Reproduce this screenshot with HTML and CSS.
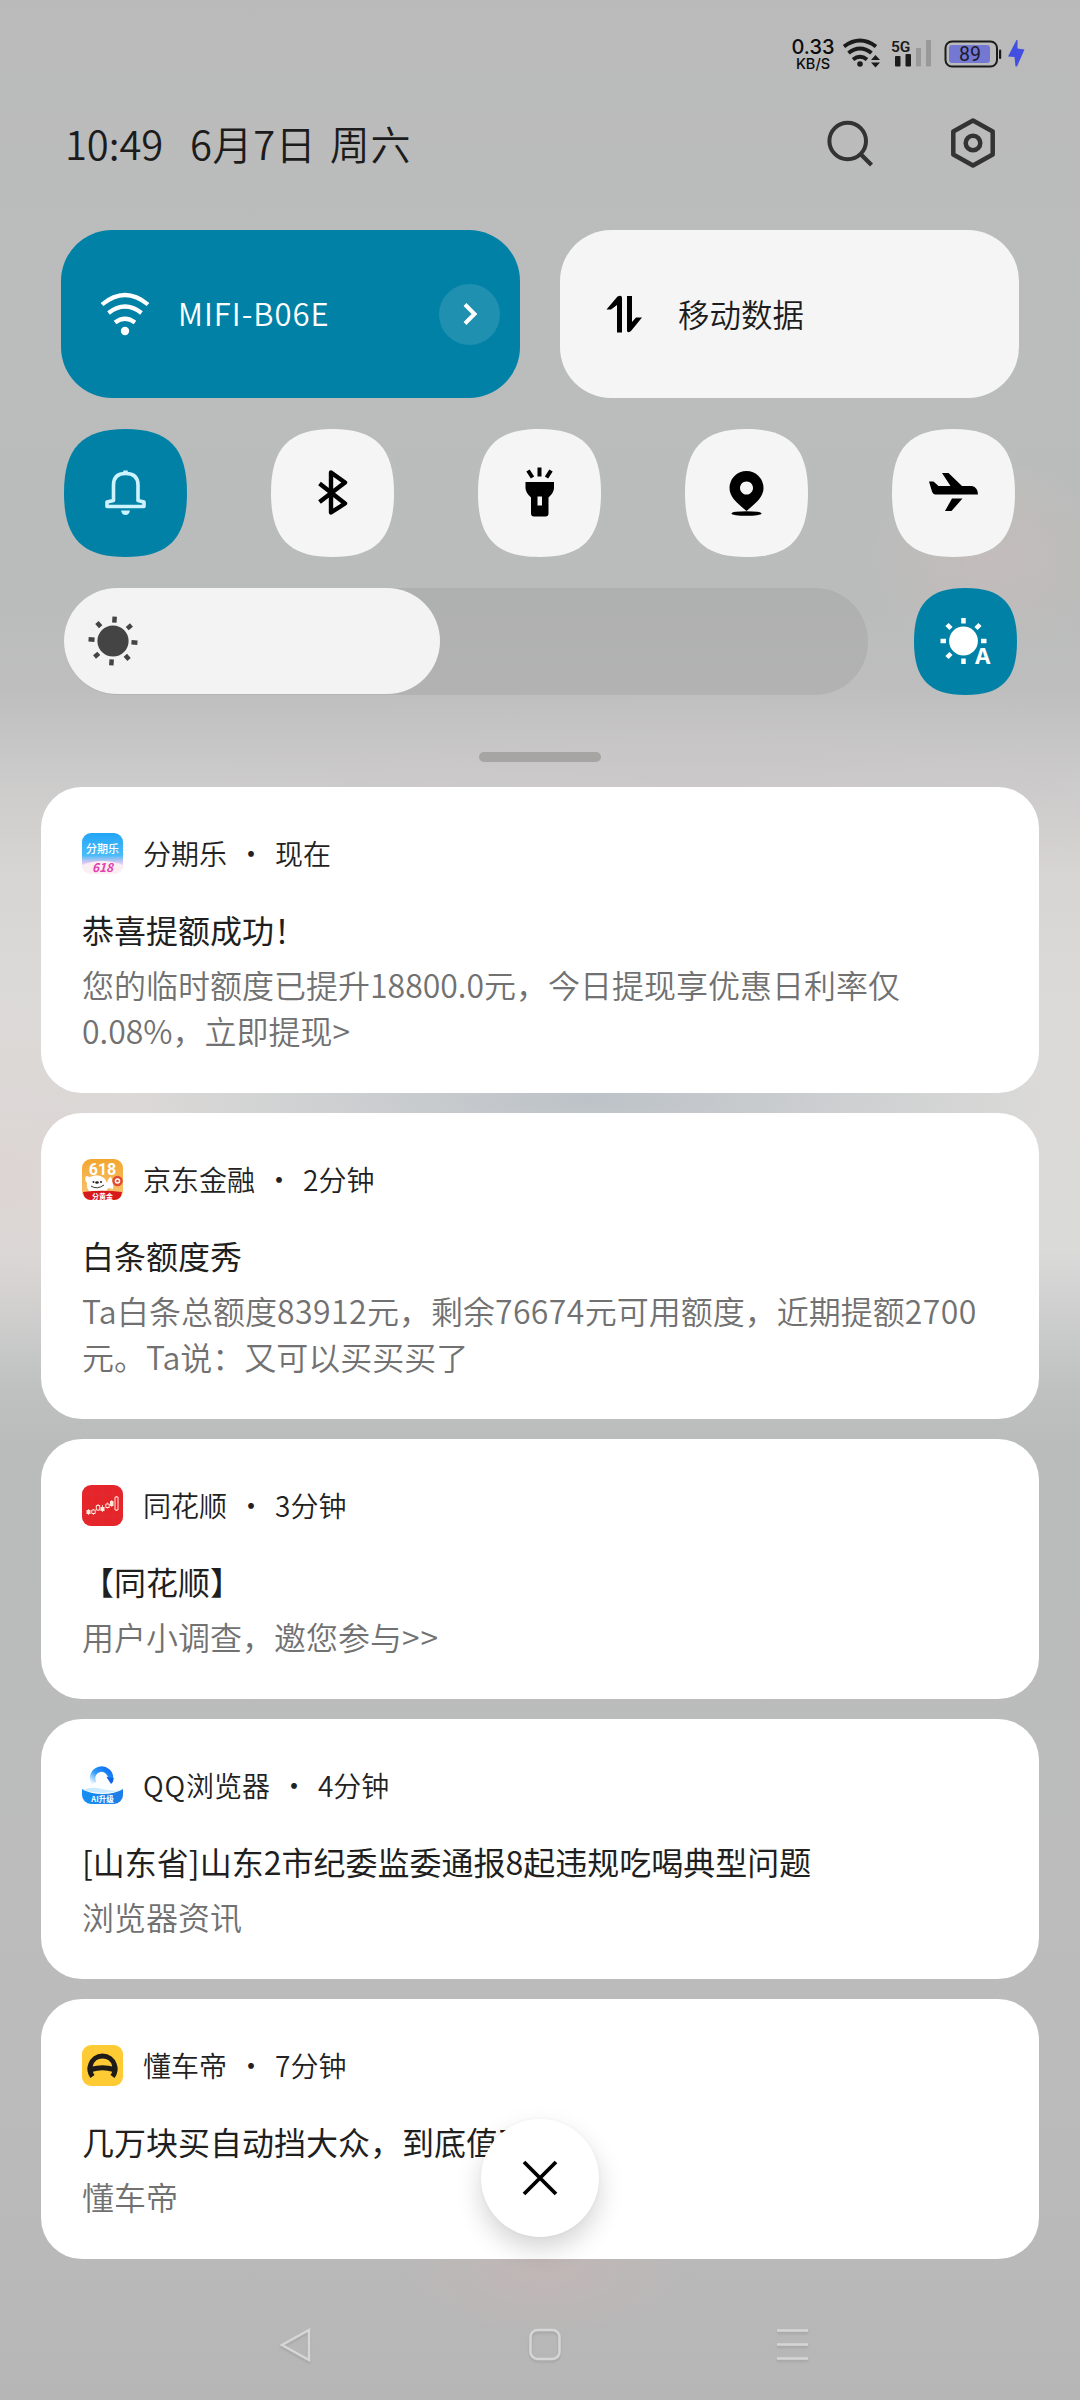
FILE: index.html
```html
<!DOCTYPE html>
<html lang="zh-CN">
<head>
<meta charset="utf-8">
<title>通知中心</title>
<link rel="stylesheet" href="styles.css">
</head>
<body>
<main class="shade">
  <div class="status">
    <div class="speed"><span class="speed-num">0.33</span><span class="speed-unit">KB/S</span></div>
    <svg class="status-icons" width="240" height="40" viewBox="840 33 240 40">
      <g fill="none" stroke="#1b1b1b" stroke-width="4">
        <path d="M844 46.5Q860 34.500 876 46.500"/>
        <path d="M848.500 53Q860 44 871.500 53"/>
        <path d="M853 59.500Q860 54 867 59.500"/>
      </g>
      <circle cx="860" cy="64" r="2.800" fill="#1b1b1b"/>
      <path d="M871 60l4.500-5 4.500 5zM871 62.500l4.500 5 4.500-5z" fill="#1b1b1b"/>
      <text x="891" y="51.500" class="net">5G</text>
      <rect x="895" y="56" width="5.500" height="10.500" rx="1" fill="#1b1b1b"/>
      <rect x="905.500" y="54" width="5.500" height="12.500" rx="1" fill="#1b1b1b"/>
      <rect x="916" y="48" width="5" height="18.500" rx="1" fill="#999"/>
      <rect x="926" y="40" width="5" height="26.500" rx="1" fill="#999"/>
      <rect x="945.500" y="41.500" width="51.500" height="25" rx="6.500" fill="none" stroke="#1b1b1b" stroke-width="2"/>
      <rect x="949" y="45" width="41" height="18" rx="3" fill="#7478d2"/>
      <rect x="999" y="49.500" width="2.200" height="9.500" rx="1" fill="#1b1b1b"/>
      <text x="959" y="61" class="pct">89</text>
      <path d="M1016.500 40L1008 56.500L1014.500 57L1015.500 66.500H1017L1024.500 49.500L1017.500 48.500L1017.500 40Z" fill="#424fe0"/>
    </svg>
  </div>

  <header class="top">
    <span class="clock">10:49</span>
    <span class="date">6月7日 周六</span>
    <svg class="top-icons" width="180" height="60" viewBox="820 113 180 60" fill="none" stroke="#333">
      <circle cx="847.700" cy="141" r="18.300" stroke-width="4"/>
      <path d="M861 154.500L871.500 165" stroke-width="4.200"/>
      <path d="M973 120.500L992.700 131.500V154.500L973 165.500L953.300 154.500V131.500Z" stroke-width="4.500" stroke-linejoin="round"/>
      <circle cx="973" cy="143" r="7.300" stroke-width="4.500"/>
    </svg>
  </header>

  <section class="wide-tiles">
    <div class="wide on">
      <svg width="50" height="44" viewBox="100 291 50 44">
        <g fill="none" stroke="#fff" stroke-width="4.200">
          <path d="M102 303.500Q125 284.500 148 303.500"/>
          <path d="M108.500 312Q125 299 141.500 312"/>
          <path d="M115 321.500Q125 314 135 321.500"/>
        </g>
        <circle cx="125" cy="330" r="4.200" fill="#fff"/>
      </svg>
      <span class="wide-label ssid">MIFI-B06E</span>
      <span class="more">
        <svg width="20" height="28" viewBox="0 0 20 28"><path d="M5 4.500L14.500 14L5 23.500" fill="none" stroke="#fff" stroke-width="4"/></svg>
      </span>
    </div>
    <div class="wide">
      <svg class="data" width="36" height="38" viewBox="606 294 36 38">
        <path d="M606.500 308.500L617.500 295.500Q622 293.500 622 297V331.500H617V304L611 308.500ZM627 295h5v26l4-4.500h6L631 330Q627 333 627 329Z" fill="#000"/>
      </svg>
      <span class="wide-label dark">移动数据</span>
    </div>
  </section>

  <section class="tiles">
    <svg width="123" height="128" viewBox="0 0 123 128">
      <path class="sq-on" d="M0 64C0 19 18 0 61.500 0S123 19 123 64 105 128 61.500 128 0 109 0 64Z"/>
      <g fill="none" stroke="#cdf3ff" stroke-width="3.600" stroke-linejoin="round">
        <path d="M49.500 71.500V56C49.500 48 54 44.500 61.500 44.500S74 48 74 56V71.500L80 73V77.500H43V73Z"/>
        <path d="M61.500 41.500v3" stroke-width="4.500"/>
      </g>
      <path d="M57 81.500h9q-1 4.500-4.500 4.500T57 81.500Z" fill="#cdf3ff"/>
    </svg>
    <svg width="123" height="128" viewBox="0 0 123 128">
      <path class="sq" d="M0 64C0 19 18 0 61.500 0S123 19 123 64 105 128 61.500 128 0 109 0 64Z"/>
      <path d="M48.500 54.500L74 74.500L60 83.500V43.500L74 53.500L48.500 73" fill="none" stroke="#000" stroke-width="4.400" stroke-linejoin="round"/>
    </svg>
    <svg width="123" height="128" viewBox="0 0 123 128">
      <path class="sq" d="M0 64C0 19 18 0 61.500 0S123 19 123 64 105 128 61.500 128 0 109 0 64Z"/>
      <path d="M50 41.500l4.500 7M61.500 38.500v9M73 41.500l-4.500 7" stroke="#000" stroke-width="4" fill="none"/>
      <path fill-rule="evenodd" d="M47.500 53h28.500v6q0 4.500-5.500 9.500v16q0 3-3 3H56q-3 0-3-3v-16q-5.500-5-5.500-9.500ZM59.500 67.500v9h4.500v-9Z"/>
    </svg>
    <svg width="123" height="128" viewBox="0 0 123 128">
      <path class="sq" d="M0 64C0 19 18 0 61.500 0S123 19 123 64 105 128 61.500 128 0 109 0 64Z"/>
      <path fill-rule="evenodd" d="M61.500 82C52 74 44.500 68 44.500 59a17 17 0 0 1 34 0C78.500 68 71 74 61.500 82ZM61.500 52.500a6.500 6.500 0 1 0 .01 0Z"/>
      <ellipse cx="61.500" cy="84.500" rx="15" ry="2.300"/>
    </svg>
    <svg width="123" height="128" viewBox="0 0 123 128">
      <path class="sq" d="M0 64C0 19 18 0 61.500 0S123 19 123 64 105 128 61.500 128 0 109 0 64Z"/>
      <path d="M37 52.500h4.500l5 4.500h12L50 44h6.500L70 57h10q6 1.500 6 8.500H43.500q-2.500 0-3.500-3ZM60 69.500h10.500L59.500 82H53Z"/>
    </svg>
  </section>

  <section class="bright">
    <div class="slider"><div class="fill">
      <svg width="50" height="52" viewBox="-25 -26 50 52" fill="#444">
        <circle r="15.600"/>
        <g stroke="#444" stroke-width="4.500" transform="rotate(4)">
          <path d="M0-18.500v-6M0 18.500v6M18.500 0h6M-18.500 0h-6M13.300-13.300l4-4M-13.300 13.300l-4 4M13.300 13.300l4 4M-13.300-13.300l-4-4"/>
        </g>
      </svg>
    </div></div>
    <svg width="103" height="107" viewBox="0 0 103 107">
      <path class="sq-on" d="M0 53.500C0 16 15 0 51.500 0S103 16 103 53.500 88 107 51.500 107 0 91 0 53.500Z"/>
      <circle cx="49.500" cy="53" r="14.400" fill="#fff"/>
      <path transform="translate(49.500 53)" stroke="#fff" stroke-width="4.500" d="M0-17.500v-5.500M0 17.500v5.500M17.500 0h5.500M-17.500 0h-5.500M12.500-12.500l4-4M-12.500 12.500l-4 4M-12.500-12.500l-4-4"/>
      <text x="60.500" y="76" class="auto">A</text>
    </svg>
  </section>

  <div class="handle"></div>

  <section class="cards">
    <article class="card">
      <div class="head">
        <svg class="app" viewBox="0 0 41 41">
          <defs><linearGradient id="sky" x2="0" y2="1"><stop offset="0" stop-color="#22a5f6"/><stop offset=".55" stop-color="#4bbcf8"/><stop offset=".72" stop-color="#d9c8f0"/><stop offset="1" stop-color="#fff0ef"/></linearGradient></defs>
          <rect width="41" height="41" rx="9" fill="url(#sky)"/>
          <path d="M0 32Q20 24 41 32a9 9 0 0 1-9 9H9a9 9 0 0 1-9-9Z" fill="#fbeff2"/>
          <text x="20.500" y="20" class="logo thin" font-size="11" fill="#fff">分期乐</text>
          <text x="20.500" y="39" class="logo slant" font-size="12" fill="#e23fae">618</text>
        </svg>
        <span>分期乐</span><span class="dot">·</span><span>现在</span>
      </div>
      <h2>恭喜提额成功！</h2>
      <p>您的临时额度已提升18800.0元，今日提现享优惠日利率仅<br>0.08%，立即提现&gt;</p>
    </article>
    <article class="card">
      <div class="head">
        <svg class="app" viewBox="0 0 41 41">
          <defs><linearGradient id="gold" x2="0" y2="1"><stop offset="0" stop-color="#f3a52e"/><stop offset="1" stop-color="#f7c77a"/></linearGradient></defs>
          <rect width="41" height="41" rx="9" fill="url(#gold)"/>
          <text x="20.500" y="16" class="logo round" font-size="16" fill="#fff">618</text>
          <path d="M4 17l4 1q8-4 14 1 2 2 3 5 1-5 4-6 3 6 2 12l-5-1-2 4H8q-4-4-3-9-3-3-1-7Z" fill="#fff"/>
          <circle cx="11.500" cy="23" r="1" fill="#222"/><circle cx="19" cy="23" r="1" fill="#222"/><ellipse cx="15" cy="23.500" rx="1.800" ry="1.200" fill="#222"/>
          <path d="M9 27q6 4 13-1" fill="none" stroke="#222" stroke-width=".9"/>
          <circle cx="35.500" cy="22" r="4" fill="#fff" stroke="#e34b32" stroke-width="2.500"/><circle cx="35.500" cy="22" r="1.300" fill="#e34b32"/>
          <path d="M1 33Q20 30.500 40 33Q39 41 32 41H9Q2 41 1 33Z" fill="#d7191c"/>
          <text x="20.500" y="39.500" class="logo" font-size="7" fill="#fff">分黄金</text>
        </svg>
        <span>京东金融</span><span class="dot">·</span><span>2分钟</span>
      </div>
      <h2>白条额度秀</h2>
      <p><span class="n">Ta</span>白条总额度<span class="n">83912</span>元，剩余<span class="n">76674</span>元可用额度，近期提额<span class="n">2700</span><br>元。Ta说：又可以买买买了</p>
    </article>
    <article class="card">
      <div class="head">
        <svg class="app" viewBox="0 0 41 41">
          <rect width="41" height="41" rx="9" fill="#e6252a"/>
          <path d="M10 0v41M20.500 0v41M31 0v41M0 10h41M0 20.500h41M0 31h41" stroke="#d9353a" stroke-width=".5"/>
          <path d="M4.500 25h4v4h-4zM18.500 22h4v4h-4zM28 16h3.500v5H28z" fill="#ffe9dc"/>
          <path d="M6.500 24v6M11.500 24v6M16 19v7M20.500 20v7M25.500 17.500v6M29.700 15v7M34.500 11v15" stroke="#ffe9dc" stroke-width=".8"/>
          <path d="M9.800 25h3.400v3.500H9.800zM14.300 20.500h3.400v4.500h-3.400zM23.800 19h3.400v3.500h-3.400zM33 12h3v13h-3z" fill="#e6252a" stroke="#ffe9dc"/>
        </svg>
        <span>同花顺</span><span class="dot">·</span><span>3分钟</span>
      </div>
      <h2>【同花顺】</h2>
      <p>用户小调查，邀您参与<span class="wide-gt">&gt;&gt;</span></p>
    </article>
    <article class="card">
      <div class="head">
        <svg class="app" viewBox="0 0 41 41">
          <defs><linearGradient id="ring" x1="1" x2="0" y2="1"><stop offset="0" stop-color="#0b6df2"/><stop offset=".55" stop-color="#2e9bf8"/><stop offset="1" stop-color="#e8f6ff"/></linearGradient>
          <linearGradient id="sea" x2="1"><stop offset="0" stop-color="#1590f2"/><stop offset="1" stop-color="#1c7de6"/></linearGradient></defs>
          <path d="M0 9a9 9 0 0 1 9-9H32a9 9 0 0 1 9 9V28H0Z" fill="#fdfeff"/>
          <path d="M0 24Q8 29 20.500 29T41 24V30a9 9 0 0 1-9 9H9a9 9 0 0 1-9-9Z" fill="url(#sea)"/>
          <path d="M1 25Q9 21 20 24T40 25Q30 28 20.500 28T1 25Z" fill="#cbeafd"/>
          <path d="M12 18A9 9 0 1 1 28.500 14" fill="none" stroke="url(#ring)" stroke-width="5.500"/>
          <path d="M24.500 12l7 1q.5 4-2.500 6Z" fill="#0f63e8"/>
          <text x="20.500" y="37" class="logo" font-size="7.500" fill="#fff">AI升级</text>
        </svg>
        <span><span class="qq">QQ</span>浏览器</span><span class="dot">·</span><span>4分钟</span>
      </div>
      <h2>[山东省]山东2市纪委监委通报8起违规吃喝典型问题</h2>
      <p>浏览器资讯</p>
    </article>
    <article class="card">
      <div class="head">
        <svg class="app" viewBox="0 0 41 41">
          <rect width="41" height="41" rx="9" fill="#ffcb35"/>
          <path d="M10.500 31.500Q6.500 26 8.500 20A12.500 12.500 0 0 1 32.500 20Q34.500 26 30.500 31.500M9 24.500Q20.500 21 32 24.500" fill="none" stroke="#1f1c18" stroke-width="5"/>
        </svg>
        <span>懂车帝</span><span class="dot">·</span><span>7分钟</span>
      </div>
      <h2>几万块买自动挡大众，到底值不值？</h2>
      <p>懂车帝</p>
      <div class="close">
        <svg width="36" height="36" viewBox="0 0 36 36"><path d="M2 2L34 34M34 2L2 34" stroke="#000" stroke-width="3.800"/></svg>
      </div>
    </article>
  </section>

  <nav class="nav">
    <svg width="32" height="34" viewBox="0 0 32 34"><path d="M29 2V32L2 17Z"/></svg>
    <svg width="32" height="34" viewBox="0 0 32 34"><rect x="1.500" y="2" width="29" height="29" rx="7"/></svg>
    <svg width="32" height="34" viewBox="0 0 32 34"><path d="M0 2.500H31M0 16.500H31M0 30.500H31"/></svg>
  </nav>
</main>
</body>
</html>
```
FILE: styles.css
```css
* { box-sizing: border-box; }
body { margin: 0; }
svg { display: block; flex: none; }

.shade {
  width: 1080px;
  height: 2400px;
  overflow: hidden;
  display: flex;
  flex-direction: column;
  font-family: "Noto Sans CJK SC", "Noto Sans", sans-serif;
  font-weight: 350;
  color: #1c1c1c;
  background:
    radial-gradient(ellipse 120px 100px at 990px 560px, rgba(205,188,188,.5), transparent),
    radial-gradient(ellipse 150px 70px at 545px 2270px, rgba(202,180,180,.5), transparent),
    radial-gradient(ellipse 460px 90px at 590px 1100px, rgba(178,186,194,.75), transparent),
    radial-gradient(ellipse 240px 180px at 0 1180px, rgba(222,208,206,.55), transparent),
    radial-gradient(ellipse 500px 120px at 700px 790px, rgba(200,196,198,.5), transparent),
    linear-gradient(#bababa 0, #bbbdbc 350px, #babcbb 600px, #bebebe 690px, #cbcaca 770px, #d7d5d3 870px, #dcdad8 1000px, #dadad9 1250px, #bfc1c1 1390px, #babcbb 1450px, #bbbcbb 1900px, #b9b9b9 2260px, #b6b6b6 2400px);
}

.status { display: flex; height: 73px; padding: 33px 0 0 791px; }
.speed { width: 49px; padding: 5px 5px 0 0; display: flex; flex-direction: column; align-items: center; font-family: Inter, sans-serif; font-weight: 500; color: #0c0c0c; }
.speed-num { font-size: 20px; line-height: 18px; }
.speed-unit { font-size: 14.500px; line-height: 16px; }
.net { font: 600 15.500px Roboto, sans-serif; fill: #1b1b1b; }
.pct { font: 400 19.500px Roboto, sans-serif; fill: #1b1b2b; }

.top { display: flex; align-items: center; height: 140px; margin-bottom: 2px; padding: 0 80px 0 65px; font-size: 40px; line-height: 60px; }
.clock { width: 125px; letter-spacing: -.1px; }
.date { flex: 1; letter-spacing: .6px; word-spacing: 4px; }

.wide-tiles { display: flex; gap: 40px; padding: 15px 61px 0; }
.wide { flex: 1; height: 168px; border-radius: 51px; background: #f5f5f5; display: flex; align-items: center; padding: 0 20px 0 39px; }
.wide.on { background: #0181a6; color: #fff; }
.wide-label { flex: 1; margin-left: 28px; padding-bottom: 3px; font-size: 31px; line-height: 46px; }
.wide-label.ssid { letter-spacing: 1px; }
.wide-label.dark { margin-left: 36px; font-size: 31.500px; }
.data { margin-left: 7px; }
.more { width: 61px; height: 61px; border-radius: 50%; background: rgba(255,255,255,.12); display: flex; align-items: center; justify-content: center; }

.tiles { display: flex; justify-content: space-between; padding: 31px 65.500px 0 63.500px; }
.sq { fill: #f5f5f5; }
.sq-on { fill: #0181a6; }

.bright { display: flex; justify-content: space-between; padding: 31px 63px 0 64px; }
.slider { width: 804px; height: 107px; border-radius: 53px; background: rgba(0,0,0,.06); }
.fill { width: 376px; height: 106px; border-radius: 53px; background: #f3f3f3; display: flex; align-items: center; padding-left: 24px; }
.auto { font: 700 22px Inter, sans-serif; fill: #fff; stroke: #0181a6; stroke-width: 2px; paint-order: stroke; }

.handle { width: 122px; height: 10px; margin: 57px auto 25px; border-radius: 5px; background: #a6a5a4; flex: none; }

.cards { display: flex; flex-direction: column; gap: 20px; padding: 0 41px; }
.card { position: relative; height: 260px; padding: 46px 41px 0; background: #fff; border-radius: 41px; }
.card:nth-child(-n+2) { height: 306px; }
.head { display: flex; align-items: center; height: 41px; font-size: 28px; line-height: 41px; color: #222; }
.app { width: 41px; height: 41px; margin-right: 20px; }
.dot { width: 48px; text-align: center; }
.qq { letter-spacing: .8px; }
h2 { margin: 31px 0 0; font-size: 32px; line-height: 48px; font-weight: 400; white-space: nowrap; color: #1f1f1f; }
p { margin: 8px 0 0; font-size: 32px; line-height: 46px; color: #717171; white-space: nowrap; }
.n { letter-spacing: .4px; }
.wide-gt { letter-spacing: 1px; }
.logo { text-anchor: middle; font-family: "Noto Sans CJK SC", sans-serif; font-weight: 700; }
.thin { font-weight: 500; }
.slant { font-style: italic; }
.round { font-family: Roboto, sans-serif; }

.close { position: absolute; left: 440px; top: 120px; width: 118px; height: 118px; border-radius: 50%; background: #fff; box-shadow: 0 12px 26px rgba(0,0,0,.17), 0 0 4px rgba(0,0,0,.04); display: flex; align-items: center; justify-content: center; }

.nav { display: flex; justify-content: space-between; padding: 69px 271px 0 280px; fill: none; stroke: #d6d6d6; stroke-width: 2.500px; filter: drop-shadow(0 2px 1px rgba(0,0,0,.1)); }
```
